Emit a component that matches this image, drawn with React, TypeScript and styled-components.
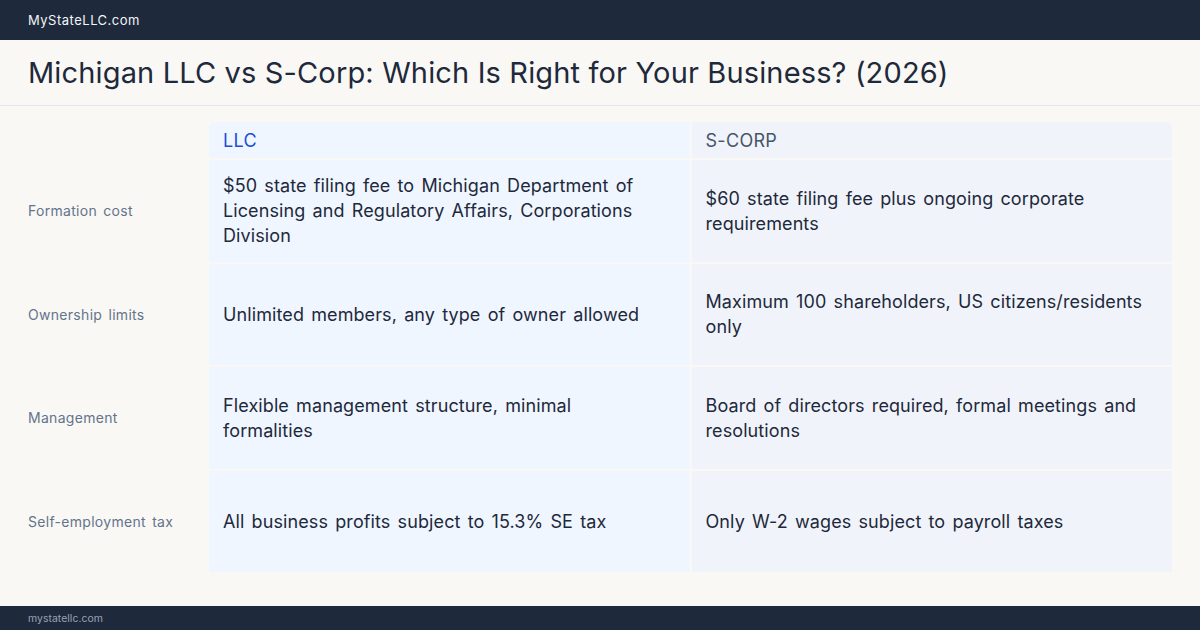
import React from "react";
import styled, { createGlobalStyle } from "styled-components";

const Global = createGlobalStyle`
  html, body { margin: 0; padding: 0; }
  body { background: #f9f8f5; font-family: Inter, "Noto Sans", sans-serif; }
  * { box-sizing: border-box; }
`;

const Page = styled.div`
  width: 1200px;
  height: 630px;
  display: flex;
  flex-direction: column;
  background: #f9f8f5;
  overflow: hidden;
`;

const TopBar = styled.div`
  height: 40px;
  flex: none;
  background: #1e293b;
  display: flex;
  align-items: center;
  padding: 0 28px;
  color: #f1f5f9;
  font-size: 13px;
  font-weight: 400;
  letter-spacing: 0.5px;
`;

const TitleBar = styled.div`
  height: 66px;
  flex: none;
  display: flex;
  align-items: center;
  padding: 0 28px 1px;
  border-bottom: 1px solid #e2e8f0;
`;

const Title = styled.h1`
  margin: 0;
  font-size: 29px;
  font-weight: 400;
  color: #1e293b;
  letter-spacing: 0.15px;
`;

const Main = styled.div`
  flex: 1;
  padding: 16px 28px 34px;
  display: flex;
`;

const Table = styled.div`
  flex: 1;
  display: grid;
  grid-template-columns: 179px 1fr 1fr;
  grid-template-rows: 36px repeat(4, 1fr);
  column-gap: 2px;
  row-gap: 2px;
`;

const Blank = styled.div``;

const HeadCell = styled.div<{ $llc?: boolean; $last?: boolean }>`
  display: flex;
  align-items: center;
  padding: 0 14px;
  font-size: 18px;
  letter-spacing: 0.3px;
  text-transform: uppercase;
  background: ${(p) => (p.$llc ? "#eff6ff" : "#f0f4fa")};
  color: ${(p) => (p.$llc ? "#1d4ed8" : "#475569")};
  border-top-left-radius: ${(p) => (p.$llc ? "6px" : "0")};
  border-top-right-radius: ${(p) => (p.$last ? "6px" : "0")};
`;

const Label = styled.div`
  display: flex;
  align-items: center;
  font-size: 14px;
  letter-spacing: 0.3px;
  word-spacing: 2px;
  color: #64748b;
`;

const Cell = styled.div<{ $llc?: boolean }>`
  display: flex;
  align-items: center;
  padding: 0 28px 0 14px;
  font-size: 18px;
  line-height: 25px;
  letter-spacing: 0.1px;
  word-spacing: 2px;
  color: #1e293b;
  background: ${(p) => (p.$llc ? "#eff6ff" : "#f0f4fa")};
`;

const BottomBar = styled.div`
  height: 24px;
  flex: none;
  background: #1e293b;
  display: flex;
  align-items: center;
  padding: 0 28px;
  color: #94a3b8;
  font-size: 10.5px;
`;

const rows = [
  {
    label: "Formation cost",
    llc: "$50 state filing fee to Michigan Department of Licensing and Regulatory Affairs, Corporations Division",
    scorp: "$60 state filing fee plus ongoing corporate requirements",
  },
  {
    label: "Ownership limits",
    llc: "Unlimited members, any type of owner allowed",
    scorp: "Maximum 100 shareholders, US citizens/residents only",
  },
  {
    label: "Management",
    llc: "Flexible management structure, minimal formalities",
    scorp: "Board of directors required, formal meetings and resolutions",
  },
  {
    label: "Self-employment tax",
    llc: "All business profits subject to 15.3% SE tax",
    scorp: "Only W-2 wages subject to payroll taxes",
  },
];

export default function App() {
  return (
    <Page>
      <Global />
      <TopBar>MyStateLLC.com</TopBar>
      <TitleBar>
        <Title>Michigan LLC vs S-Corp: Which Is Right for Your Business? (2026)</Title>
      </TitleBar>
      <Main>
        <Table>
          <Blank />
          <HeadCell $llc>LLC</HeadCell>
          <HeadCell $last>S-Corp</HeadCell>
          {rows.map((r) => (
            <React.Fragment key={r.label}>
              <Label>{r.label}</Label>
              <Cell $llc>{r.llc}</Cell>
              <Cell>{r.scorp}</Cell>
            </React.Fragment>
          ))}
        </Table>
      </Main>
      <BottomBar>mystatellc.com</BottomBar>
    </Page>
  );
}
